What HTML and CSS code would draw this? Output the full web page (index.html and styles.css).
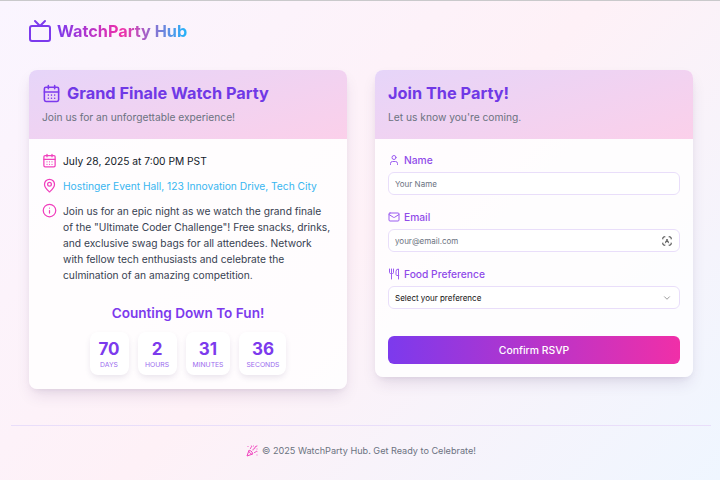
FILE: index.html
```html
<!DOCTYPE html>
<html lang="en">
<head>
    <meta charset="UTF-8">
    <meta name="viewport" content="width=device-width, initial-scale=1.0">
    <title>WatchParty Hub</title>
    <link rel="stylesheet" href="styles.css">
</head>
<body>
    <header class="site-header">
        <svg class="logo-icon" viewBox="0 0 24 24" fill="none" stroke="#7c3aed" stroke-width="2" stroke-linecap="round" stroke-linejoin="round">
            <rect x="2" y="7" width="20" height="15" rx="2"/>
            <path d="M17 2l-5 5-5-5"/>
        </svg>
        <span class="logo-text">WatchParty Hub</span>
    </header>

    <main class="columns">
        <section class="card">
            <div class="card-head">
                <h2 class="card-title">
                    <svg class="title-icon" viewBox="0 0 24 24" fill="none" stroke="#7c3aed" stroke-width="2" stroke-linecap="round" stroke-linejoin="round">
                        <path d="M8 2v4M16 2v4"/>
                        <rect x="3" y="4" width="18" height="18" rx="2"/>
                        <path d="M3 10h18M8 14h.01M12 14h.01M16 14h.01M8 18h.01M12 18h.01M16 18h.01"/>
                    </svg>
                    Grand Finale Watch Party
                </h2>
                <p class="card-sub">Join us for an unforgettable experience!</p>
            </div>
            <div class="card-body details">
                <div class="info-row">
                    <svg class="info-icon" viewBox="0 0 24 24" fill="none" stroke="#f040bd" stroke-width="2" stroke-linecap="round" stroke-linejoin="round">
                        <path d="M8 2v4M16 2v4"/>
                        <rect x="3" y="4" width="18" height="18" rx="2"/>
                        <path d="M3 10h18M8 14h.01M12 14h.01M16 14h.01M8 18h.01M12 18h.01M16 18h.01"/>
                    </svg>
                    <p class="info-date">July 28, 2025 at 7:00 PM PST</p>
                </div>
                <div class="info-row">
                    <svg class="info-icon" viewBox="0 0 24 24" fill="none" stroke="#f040bd" stroke-width="2" stroke-linecap="round" stroke-linejoin="round">
                        <path d="M20 10c0 5-5.500 10.200-7.400 11.800a1 1 0 0 1-1.200 0C9.500 20.200 4 15 4 10a8 8 0 0 1 16 0"/>
                        <circle cx="12" cy="10" r="3"/>
                    </svg>
                    <p class="info-place">Hostinger Event Hall, 123 Innovation Drive, Tech City</p>
                </div>
                <div class="info-row">
                    <svg class="info-icon" viewBox="0 0 24 24" fill="none" stroke="#f040bd" stroke-width="2" stroke-linecap="round" stroke-linejoin="round">
                        <circle cx="12" cy="12" r="10"/>
                        <path d="M12 16v-4M12 8h.01"/>
                    </svg>
                    <p class="info-text">Join us for an epic night as we watch the grand finale of the "Ultimate Coder Challenge"! Free snacks, drinks, and exclusive swag bags for all attendees. Network with fellow tech enthusiasts and celebrate the culmination of an amazing competition.</p>
                </div>

                <h3 class="count-title">Counting Down To Fun!</h3>
                <div class="count-row">
                    <div class="count-box"><span class="count-num">70</span><span class="count-label">DAYS</span></div>
                    <div class="count-box"><span class="count-num">2</span><span class="count-label">HOURS</span></div>
                    <div class="count-box"><span class="count-num">31</span><span class="count-label">MINUTES</span></div>
                    <div class="count-box"><span class="count-num">36</span><span class="count-label">SECONDS</span></div>
                </div>
            </div>
        </section>

        <section class="card">
            <div class="card-head">
                <h2 class="card-title">Join The Party!</h2>
                <p class="card-sub">Let us know you're coming.</p>
            </div>
            <form class="card-body rsvp">
                <div class="form-group">
                    <label class="form-label" for="name">
                        <svg class="label-icon" viewBox="0 0 24 24" fill="none" stroke="#9b5cf0" stroke-width="2" stroke-linecap="round" stroke-linejoin="round">
                            <path d="M19 21v-2a4 4 0 0 0-4-4H9a4 4 0 0 0-4 4v2"/>
                            <circle cx="12" cy="7" r="4"/>
                        </svg>
                        Name
                    </label>
                    <div class="field"><input id="name" type="text" placeholder="Your Name"></div>
                </div>
                <div class="form-group">
                    <label class="form-label" for="email">
                        <svg class="label-icon" viewBox="0 0 24 24" fill="none" stroke="#9b5cf0" stroke-width="2" stroke-linecap="round" stroke-linejoin="round">
                            <rect x="2" y="4" width="20" height="16" rx="2"/>
                            <path d="M22 7l-8.970 5.700a1.940 1.940 0 0 1-2.060 0L2 7"/>
                        </svg>
                        Email
                    </label>
                    <div class="field">
                        <input id="email" type="text" placeholder="your@email.com">
                        <svg class="scan-icon" viewBox="0 0 12 12" fill="none" stroke="#222" stroke-width="1.100" stroke-linecap="round" stroke-linejoin="round">
                            <path d="M1 3.500V2.500a1.500 1.500 0 0 1 1.500-1.500h1M8.500 1h1A1.500 1.500 0 0 1 11 2.500v1M11 8.500v1A1.500 1.500 0 0 1 9.500 11h-1M3.500 11h-1A1.500 1.500 0 0 1 1 9.500v-1"/>
                            <path d="M4.200 8.200L6 3.600l1.800 4.600M4.800 6.800h2.400" stroke-width="0.800"/>
                        </svg>
                    </div>
                </div>
                <div class="form-group">
                    <label class="form-label" for="food">
                        <svg class="label-icon" viewBox="0 0 24 24" fill="none" stroke="#9b5cf0" stroke-width="2" stroke-linecap="round" stroke-linejoin="round">
                            <path d="M3 2v7c0 1.100.9 2 2 2h4a2 2 0 0 0 2-2V2M7 2v20"/>
                            <path d="M21 15V2a5 5 0 0 0-5 5v6c0 1.100.9 2 2 2h3zm0 0v7"/>
                        </svg>
                        Food Preference
                    </label>
                    <div class="field">
                        <select id="food">
                            <option>Select your preference</option>
                            <option>Vegetarian</option>
                            <option>Vegan</option>
                            <option>Anything</option>
                        </select>
                        <svg class="chevron" viewBox="0 0 24 24" fill="none" stroke="#888" stroke-width="2" stroke-linecap="round" stroke-linejoin="round">
                            <path d="M6 9l6 6 6-6"/>
                        </svg>
                    </div>
                </div>
                <button class="confirm" type="button">Confirm RSVP</button>
            </form>
        </section>
    </main>

    <footer class="site-footer">
        <svg class="party-icon" viewBox="0 0 24 24" fill="none" stroke="#f040bd" stroke-width="2" stroke-linecap="round" stroke-linejoin="round">
            <path d="M5.800 11.300L2 22l10.700-3.790"/>
            <path d="M4 3h.01M22 8h.01M15 2h.01M22 20h.01"/>
            <path d="M22 2l-2.240.75a2.900 2.900 0 0 0-1.960 3.120c.1.860-.57 1.630-1.450 1.630h-.38c-.86 0-1.600.6-1.760 1.440L14 10"/>
            <path d="M22 13l-.82-.33c-.86-.34-1.820.2-1.980 1.110-.11.700-.72 1.220-1.430 1.220H17"/>
            <path d="M11 2l.33.820c.34.860-.2 1.820-1.110 1.980C9.520 4.900 9 5.520 9 6.230V7"/>
            <path d="M11 13c1.930 1.930 2.830 4.170 2 5-.83.830-3.070-.07-5-2-1.930-1.930-2.830-4.170-2-5 .83-.83 3.070.07 5 2z"/>
        </svg>
        <span>© 2025 WatchParty Hub. Get Ready to Celebrate!</span>
    </footer>
</body>
</html>
```

FILE: styles.css
```css
* {
    box-sizing: border-box;
}
html, body {
    height: 100%;
}
body {
    margin: 0;
    height: 480px;
    overflow: hidden;
    border-top: 1px solid #c9c9cb;
    font-family: Inter, "Liberation Sans", sans-serif;
    background: linear-gradient(135deg, #faf5ff 0%, #fef1f7 50%, #eff6ff 100%);
}
p, h2, h3 {
    margin: 0;
}
.site-header {
    display: flex;
    align-items: center;
    gap: 5px;
    height: 69px;
    padding: 0 29px 9px 28px;
}
.logo-icon {
    width: 24px;
    height: 24px;
}
.logo-text {
    font-size: 16.300px;
    font-weight: 700;
    background: linear-gradient(90deg, #7c3aed 0%, #f02fa8 50%, #22b5fb 100%);
    -webkit-background-clip: text;
    background-clip: text;
    color: transparent;
}
.columns {
    display: grid;
    grid-template-columns: 318px 318px;
    gap: 28px;
    align-items: start;
    padding-left: 29px;
}
.card {
    background: rgba(255, 255, 255, 0.8);
    border-radius: 8px;
    overflow: hidden;
    box-shadow: 0 8px 16px -3px rgba(60, 30, 90, 0.13), 0 3px 6px -3px rgba(60, 30, 90, 0.1);
}
.card-head {
    height: 69px;
    padding: 12px 13px 0;
    background: linear-gradient(165deg, #e6d5f9 0%, #fbd0ea 100%);
}
.card-title {
    display: flex;
    align-items: center;
    gap: 6px;
    height: 22px;
    font-size: 16.320px;
    font-weight: 700;
    color: #7039e6;
}
.title-icon {
    width: 19px;
    height: 19px;
}
.card-sub {
    margin-top: 5px;
    font-size: 10.240px;
    line-height: 16px;
    color: #6b7280;
}
.card-body {
    padding: 13px 13px 14px;
}
.details {
    padding-top: 14px;
}
.info-row {
    display: flex;
    gap: 6px;
    margin-bottom: 9px;
}
.info-icon {
    flex: none;
    width: 15px;
    height: 15px;
}
.info-row p {
    font-size: 10.240px;
    line-height: 16px;
}
.info-date {
    color: #111827;
}
.info-place {
    color: #38b6f0;
}
.info-text {
    color: #374151;
}
.count-title {
    margin-top: 20px;
    text-align: center;
    font-size: 13.600px;
    line-height: 20px;
    font-weight: 600;
    color: #7c3aed;
}
.count-row {
    display: flex;
    justify-content: center;
    gap: 9px;
    margin-top: 9px;
}
.count-box {
    display: flex;
    flex-direction: column;
    align-items: center;
    height: 43px;
    padding: 7px 7px 0;
    min-width: 39px;
    background: #fff;
    border-radius: 8px;
    box-shadow: 0 3px 6px -1px rgba(60, 30, 90, 0.12);
}
.count-num {
    font-size: 17px;
    line-height: 20px;
    font-weight: 700;
    color: #7c3aed;
}
.count-label {
    font-size: 6.800px;
    line-height: 11px;
    color: #9a6bee;
}
.rsvp {
    padding-bottom: 13px;
}
.form-group {
    margin-bottom: 14px;
}
.form-label {
    display: flex;
    align-items: center;
    gap: 4px;
    height: 16px;
    margin-bottom: 4px;
    font-size: 10.240px;
    font-weight: 500;
    color: #8f4be9;
}
.label-icon {
    width: 12px;
    height: 12px;
}
.field {
    display: flex;
    align-items: center;
    height: 23px;
    padding-right: 6px;
    background: #fff;
    border: 1px solid #e9defa;
    border-radius: 6px;
}
.field input, .field select {
    flex: 1;
    min-width: 0;
    padding: 0 0 0 6px;
    border: none;
    outline: none;
    background: transparent;
    font-family: inherit;
    font-size: 8px;
    color: #111;
    appearance: none;
}
.field input::placeholder {
    color: #6b7280;
}
.scan-icon {
    flex: none;
    width: 10px;
    height: 10px;
    margin-right: 1px;
}
.chevron {
    flex: none;
    width: 10px;
    height: 10px;
    margin-right: 1px;
}
.confirm {
    display: block;
    width: 100%;
    height: 28px;
    margin-top: 27px;
    border: none;
    border-radius: 6px;
    background: linear-gradient(90deg, #7c3aed 0%, #f02fa8 100%);
    color: #fff;
    font-family: inherit;
    font-size: 10.400px;
    font-weight: 500;
    cursor: pointer;
}
.site-footer {
    display: flex;
    justify-content: center;
    align-items: flex-start;
    gap: 4px;
    margin: 36px 9px 0 11px;
    padding-top: 17px;
    border-top: 1px solid #e9defa;
    line-height: 16px;
    font-size: 9.120px;
    color: #6b7280;
}
.party-icon {
    width: 12px;
    height: 12px;
    margin-top: 2px;
}
```
